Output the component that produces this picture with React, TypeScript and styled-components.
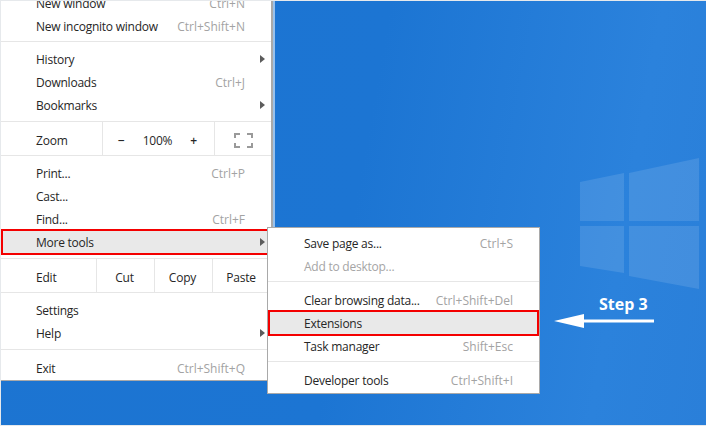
import { createGlobalStyle, styled } from "styled-components";

const GlobalStyle = createGlobalStyle`
  html, body {
    margin: 0;
    padding: 0;
    background: #fff;
  }
`;

const Desktop = styled.div`
  position: relative;
  box-sizing: border-box;
  width: 706px;
  height: 426px;
  overflow: hidden;
  border: 1px solid #e6e9ec;
  border-right: 0;
  background: linear-gradient(100deg, #1c74d1 0%, #1c75d3 50%, #2b82dc 85%, #2a7fd9 100%);
  font-family: "Open Sans", "Noto Sans", sans-serif;
  font-size: 12px;
  color: #262626;
`;

const MainMenu = styled.div`
  box-sizing: border-box;
  width: 272px;
  height: 393px;
  margin-top: -13px;
  padding-top: 2px;
  background: #fff;
  border-right: 2px solid #a9a9a9;
  border-bottom: 1px solid #a9a9a9;
  box-shadow: 2px 0 0 rgba(255, 255, 255, 0.55);
`;

const SubMenu = styled.div`
  position: absolute;
  left: 266px;
  top: 226px;
  box-sizing: border-box;
  width: 273px;
  height: 167px;
  padding-top: 4px;
  background: #fff;
  border: 1px solid #a9a9a9;
`;

const Group = styled.div<{ $top: number; $bottom: number }>`
  padding: ${(p) => p.$top}px 0 ${(p) => p.$bottom}px;
  border-bottom: 1px solid #e6e6e6;

  &:last-child {
    border-bottom: 0;
  }
`;

const Row = styled.div<{ $active?: boolean; $muted?: boolean }>`
  position: relative;
  box-sizing: border-box;
  display: flex;
  align-items: center;
  justify-content: space-between;
  height: 23px;
  padding: 0 26px 0 35px;
  letter-spacing: -0.24px;
  color: ${(p) => (p.$muted ? "#a5a5a5" : "#262626")};
  background: ${(p) => (p.$active ? "#e9e9e9" : "transparent")};
`;

const Outline = styled.div`
  position: absolute;
  left: 0;
  right: 0;
  top: -2px;
  bottom: -1px;
  border: 2px solid #f40000;
  pointer-events: none;
`;

const SubRow = styled(Row)`
  padding: 0 26px 0 36px;
`;

const Shortcut = styled.span`
  color: #a3a3a3;
  letter-spacing: 0;
`;

const Caret = styled.span`
  position: absolute;
  right: 6px;
  top: 7px;
  width: 0;
  height: 0;
  border-left: 5px solid #5c5c5c;
  border-top: 4px solid transparent;
  border-bottom: 4px solid transparent;
`;

const ControlRow = styled.div`
  display: flex;
  align-items: stretch;
  height: 33px;
  border-bottom: 1px solid #e6e6e6;
  letter-spacing: -0.2px;
`;

const ControlLabel = styled.div<{ $width: number }>`
  box-sizing: border-box;
  display: flex;
  align-items: center;
  width: ${(p) => p.$width}px;
  padding: 4px 0 0 35px;
`;

const Cell = styled.div<{ $width: number }>`
  box-sizing: border-box;
  display: flex;
  align-items: center;
  justify-content: center;
  width: ${(p) => p.$width}px;
  padding-top: 3px;
  border-left: 1px solid #e6e6e6;
`;

const ZoomCell = styled(Cell)`
  justify-content: space-between;
  padding: 3px 17px 0 15px;
`;

const EditCell = styled(Cell)`
  padding: 3px 2px 0 0;
`;

const ZoomSign = styled.span`
  font-weight: 600;
`;

const Logo = styled.svg`
  position: absolute;
  left: 578px;
  top: 156px;
  fill: #ffffff;
  opacity: 0.11;
`;

const StepLabel = styled.div`
  position: absolute;
  left: 598px;
  top: 292px;
  color: #fff;
  font-size: 16px;
  line-height: 22px;
  font-weight: 700;
`;

const StepArrow = styled.svg`
  position: absolute;
  left: 552px;
  top: 311px;
  fill: #fff;
`;

const FullscreenIcon = () => (
  <svg width="19" height="15" viewBox="0 0 19 15" fill="none" stroke="#9a9a9a" strokeWidth="2">
    <path d="M1 5V1h5M13 1h5v4M18 10v4h-5M6 14H1v-4" />
  </svg>
);

const App = () => {
  return (
    <>
      <GlobalStyle />
      <Desktop>
        <Logo width="122" height="134" viewBox="0 0 122 134">
          <path d="M1 25 45 16V64H1Z" />
          <path d="M50 16 120 1V64H50Z" />
          <path d="M1 69H45V116L1 109Z" />
          <path d="M50 69H120V132L50 119Z" />
        </Logo>

        <MainMenu>
          <Group $top={2} $bottom={3}>
            <Row>
              New window<Shortcut>Ctrl+N</Shortcut>
            </Row>
            <Row>
              New incognito window<Shortcut>Ctrl+Shift+N</Shortcut>
            </Row>
          </Group>
          <Group $top={6} $bottom={4}>
            <Row>
              History<Caret />
            </Row>
            <Row>
              Downloads<Shortcut>Ctrl+J</Shortcut>
            </Row>
            <Row>
              Bookmarks<Caret />
            </Row>
          </Group>
          <ControlRow>
            <ControlLabel $width={101}>Zoom</ControlLabel>
            <ZoomCell $width={112}>
              <ZoomSign>−</ZoomSign>
              <span>100%</span>
              <ZoomSign>+</ZoomSign>
            </ZoomCell>
            <Cell $width={57}>
              <FullscreenIcon />
            </Cell>
          </ControlRow>
          <Group $top={6} $bottom={4}>
            <Row>
              Print...<Shortcut>Ctrl+P</Shortcut>
            </Row>
            <Row>Cast...</Row>
            <Row>
              Find...<Shortcut>Ctrl+F</Shortcut>
            </Row>
            <Row $active>
              More tools<Caret />
              <Outline />
            </Row>
          </Group>
          <ControlRow>
            <ControlLabel $width={95}>Edit</ControlLabel>
            <EditCell $width={58}>Cut</EditCell>
            <EditCell $width={58}>Copy</EditCell>
            <EditCell $width={59}>Paste</EditCell>
          </ControlRow>
          <Group $top={6} $bottom={4}>
            <Row>Settings</Row>
            <Row>
              Help<Caret />
            </Row>
          </Group>
          <Group $top={7} $bottom={0}>
            <Row>
              Exit<Shortcut>Ctrl+Shift+Q</Shortcut>
            </Row>
          </Group>
        </MainMenu>

        <SubMenu>
          <Group $top={0} $bottom={3}>
            <SubRow>
              Save page as...<Shortcut>Ctrl+S</Shortcut>
            </SubRow>
            <SubRow $muted>Add to desktop...</SubRow>
          </Group>
          <Group $top={7} $bottom={3}>
            <SubRow>
              Clear browsing data...<Shortcut>Ctrl+Shift+Del</Shortcut>
            </SubRow>
            <SubRow $active>
              Extensions
              <Outline />
            </SubRow>
            <SubRow>
              Task manager<Shortcut>Shift+Esc</Shortcut>
            </SubRow>
          </Group>
          <Group $top={7} $bottom={0}>
            <SubRow>
              Developer tools<Shortcut>Ctrl+Shift+I</Shortcut>
            </SubRow>
          </Group>
        </SubMenu>

        <StepLabel>Step 3</StepLabel>
        <StepArrow width="102" height="18" viewBox="0 0 102 18">
          <path d="M1 9 31 2V7.500H101V10.500H31V16Z" />
        </StepArrow>
      </Desktop>
    </>
  );
};

export default App;
